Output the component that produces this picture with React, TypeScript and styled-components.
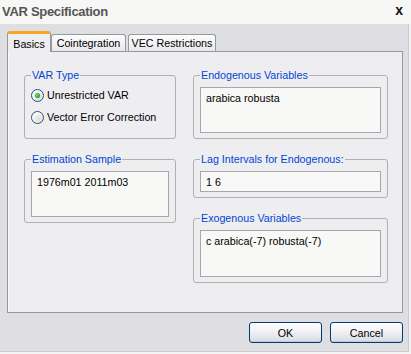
import styled, { createGlobalStyle } from 'styled-components';

const GlobalStyle = createGlobalStyle`
  html, body {
    margin: 0;
    padding: 0;
    background: #f3f3f3;
  }
  * {
    box-sizing: border-box;
  }
`;

const Window = styled.div`
  width: 411px;
  height: 354px;
  display: flex;
  flex-direction: column;
  background: #f3f3f3;
  font-family: 'Liberation Sans', Arial, sans-serif;
  font-size: 10.7px;
  color: #000;
`;

// 제목줄
const TitleBar = styled.div`
  height: 24px;
  flex: none;
  display: flex;
  align-items: center;
  justify-content: space-between;
  padding: 0 8px 2px 2px;
  background: #f7f7f5;
`;

const Title = styled.div`
  font-size: 13px;
  font-weight: bold;
  letter-spacing: -0.3px;
  color: #555;
`;

const CloseX = styled.div`
  font-size: 14px;
  font-weight: bold;
  line-height: 1;
  color: #111;
  margin-bottom: 3px;
`;

const Body = styled.div`
  flex: 1;
  display: flex;
  flex-direction: column;
  padding: 7px 5px 8px 7px;
  margin: 0 2px 2px 0;
  background: #dfdfe3;
  border-right: 1px solid #c9c9ce;
  border-bottom: 1px solid #c9c9ce;
`;

const TabRow = styled.div`
  height: 20px;
  display: flex;
  align-items: flex-end;
`;

const Tab = styled.div<{ $active?: boolean; $w: number; $ml?: number }>`
  position: relative;
  width: ${(p) => p.$w}px;
  margin-left: ${(p) => p.$ml || 0}px;
  height: ${(p) => (p.$active ? 21 : 17)}px;
  margin-bottom: ${(p) => (p.$active ? -1 : 0)}px;
  z-index: ${(p) => (p.$active ? 2 : 1)};
  display: flex;
  align-items: center;
  justify-content: center;
  padding-top: ${(p) => (p.$active ? 2 : 0)}px;
  border: 1px solid #919b9c;
  border-bottom: none;
  border-top: ${(p) => (p.$active ? '3px solid #f5a623' : '1px solid #919b9c')};
  border-radius: 3px 3px 0 0;
  background: ${(p) =>
    p.$active ? '#eeeef0' : 'linear-gradient(#fdfdfd, #e8e8ec)'};
  white-space: nowrap;
`;

const Panel = styled.div`
  height: 262px;
  flex: none;
  display: grid;
  grid-template-columns: 152px 195px;
  column-gap: 17px;
  align-items: start;
  padding: 17px 0 0 16px;
  background: #eeeef0;
  border: 1px solid #919b9c;
  box-shadow: inset 1px 0 0 #fbfbfb;
`;

const Column = styled.div`
  display: flex;
  flex-direction: column;
  gap: 14px;
`;

const Group = styled.fieldset`
  margin: 0;
  min-width: 0;
  padding: 6px 6px 5px;
  border: 1px solid #b0b0b4;
  border-radius: 3px;
`;

const Legend = styled.legend`
  padding: 0 1px;
  line-height: 12px;
  color: #0046d5;
`;

const RadioRow = styled.label`
  height: 22px;
  display: flex;
  align-items: center;
  gap: 3px;
  &:first-of-type {
    margin-top: -3px;
  }
`;

const RadioCircle = styled.span<{ $checked?: boolean }>`
  width: 13px;
  height: 13px;
  flex: none;
  border-radius: 50%;
  border: 1px solid #1c5180;
  background: radial-gradient(circle at 65% 65%, #dcdad2, #ffffff 75%);
  display: flex;
  align-items: center;
  justify-content: center;
  &::after {
    content: '';
    display: ${(p) => (p.$checked ? 'block' : 'none')};
    width: 5px;
    height: 5px;
    border-radius: 50%;
    background: radial-gradient(circle at 40% 40%, #6ee06e, #21a121 70%);
  }
`;

const RadioSpacer = styled.div`
  height: 5px;
`;

const Field = styled.div<{ $h: number }>`
  height: ${(p) => p.$h}px;
  padding: 3px 5px;
  line-height: 14px;
  background: #f8f8f6;
  border: 1px solid #a4a8ad;
  white-space: nowrap;
`;

const ButtonRow = styled.div`
  margin-top: 9px;
  display: flex;
  justify-content: flex-end;
  gap: 8px;
`;

const Button = styled.button`
  width: 73px;
  height: 21px;
  padding: 0;
  font-family: 'Liberation Sans', Arial, sans-serif;
  font-size: 10.7px;
  color: #000;
  border: 1px solid #003c74;
  border-radius: 3px;
  background: linear-gradient(#ffffff 0%, #f3f3f6 40%, #d9d9e4 100%);
  box-shadow: inset 0 -1px 0 #c6c6d4;
`;

export default function App() {
  return (
    <Window>
      <GlobalStyle />
      <TitleBar>
        <Title>VAR Specification</Title>
        <CloseX>x</CloseX>
      </TitleBar>
      <Body>
        <TabRow>
          <Tab $active $w={44}>Basics</Tab>
          <Tab $w={75} $ml={0}>Cointegration</Tab>
          <Tab $w={88} $ml={2}>VEC Restrictions</Tab>
        </TabRow>
        <Panel>
          <Column>
            <Group>
              <Legend>VAR Type</Legend>
              <RadioRow>
                <RadioCircle $checked />
                Unrestricted VAR
              </RadioRow>
              <RadioRow>
                <RadioCircle />
                Vector Error Correction
              </RadioRow>
              <RadioSpacer />
            </Group>
            <Group>
              <Legend>Estimation Sample</Legend>
              <Field $h={46}>1976m01 2011m03</Field>
            </Group>
          </Column>
          <Column>
            <Group>
              <Legend>Endogenous Variables</Legend>
              <Field $h={46}>arabica robusta</Field>
            </Group>
            <Group>
              <Legend>Lag Intervals for Endogenous:</Legend>
              <Field $h={21}>1 6</Field>
            </Group>
            <Group>
              <Legend>Exogenous Variables</Legend>
              <Field $h={47}>c arabica(-7) robusta(-7)</Field>
            </Group>
          </Column>
        </Panel>
        <ButtonRow>
          <Button>OK</Button>
          <Button>Cancel</Button>
        </ButtonRow>
      </Body>
    </Window>
  );
}
